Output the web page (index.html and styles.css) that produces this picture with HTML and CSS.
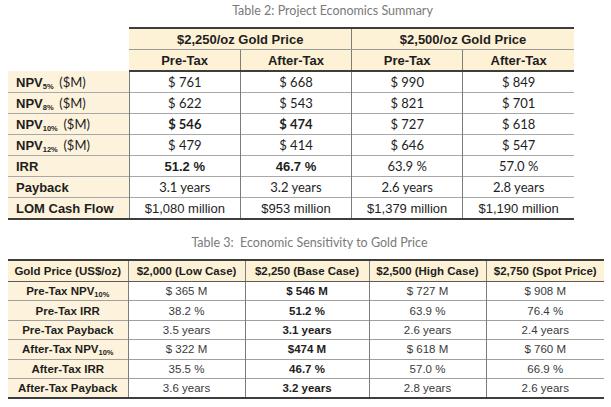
FILE: index.html
```html
<!DOCTYPE html>
<html>
<head>
<meta charset="utf-8">
<link rel="stylesheet" href="styles.css">
</head>
<body>
<div class="page">
  <div class="title t2">Table 2: Project Economics Summary</div>
  <table class="econ">
    <colgroup>
      <col class="c-label"><col class="c-val"><col class="c-val"><col class="c-val"><col class="c-val">
    </colgroup>
    <tr class="h1">
      <td class="blank"></td>
      <th colspan="2" class="first">$2,250/oz Gold Price</th>
      <th colspan="2">$2,500/oz Gold Price</th>
    </tr>
    <tr class="h2">
      <td class="blank"></td>
      <th class="first">Pre-Tax</th>
      <th>After-Tax</th>
      <th>Pre-Tax</th>
      <th>After-Tax</th>
    </tr>
    <tr class="first-row">
      <td class="lab">NPV<sub>5%</sub> <span class="cal">($M)</span></td>
      <td class="cal">$ 761</td><td class="cal">$ 668</td><td class="cal">$ 990</td><td class="cal">$ 849</td>
    </tr>
    <tr>
      <td class="lab">NPV<sub>8%</sub> <span class="cal">($M)</span></td>
      <td class="cal">$ 622</td><td class="cal">$ 543</td><td class="cal">$ 821</td><td class="cal">$ 701</td>
    </tr>
    <tr>
      <td class="lab">NPV<sub>10%</sub> <span class="cal">($M)</span></td>
      <td class="cal b">$ 546</td><td class="cal b">$ 474</td><td class="cal">$ 727</td><td class="cal">$ 618</td>
    </tr>
    <tr>
      <td class="lab">NPV<sub>12%</sub> <span class="cal">($M)</span></td>
      <td class="cal">$ 479</td><td class="cal">$ 414</td><td class="cal">$ 646</td><td class="cal">$ 547</td>
    </tr>
    <tr>
      <td class="lab">IRR</td>
      <td class="ar b">51.2 %</td><td class="ar b">46.7 %</td><td class="cal">63.9 %</td><td class="cal">57.0 %</td>
    </tr>
    <tr>
      <td class="lab">Payback</td>
      <td class="cal">3.1 years</td><td class="cal">3.2 years</td><td class="cal">2.6 years</td><td class="cal">2.8 years</td>
    </tr>
    <tr class="last-row">
      <td class="lab">LOM Cash Flow</td>
      <td class="ar">$1,080 million</td><td class="ar">$953 million</td><td class="ar">$1,379 million</td><td class="ar">$1,190 million</td>
    </tr>
  </table>

  <div class="title t3">Table 3:&nbsp; Economic Sensitivity to Gold Price</div>
  <table class="sens">
    <colgroup>
      <col class="s1"><col class="s2"><col class="s3"><col class="s4"><col class="s5">
    </colgroup>
    <tr class="sh">
      <th>Gold Price (US$/oz)</th>
      <th>$2,000 (Low Case)</th>
      <th>$2,250 (Base Case)</th>
      <th>$2,500 (High Case)</th>
      <th>$2,750 (Spot Price)</th>
    </tr>
    <tr>
      <td class="lab">Pre-Tax NPV<sub>10%</sub></td>
      <td>$ 365 M</td><td class="b">$ 546 M</td><td>$ 727 M</td><td>$ 908 M</td>
    </tr>
    <tr>
      <td class="lab">Pre-Tax IRR</td>
      <td>38.2 %</td><td class="b">51.2 %</td><td>63.9 %</td><td>76.4 %</td>
    </tr>
    <tr>
      <td class="lab">Pre-Tax Payback</td>
      <td>3.5 years</td><td class="b">3.1 years</td><td>2.6 years</td><td>2.4 years</td>
    </tr>
    <tr>
      <td class="lab">After-Tax NPV<sub>10%</sub></td>
      <td>$ 322 M</td><td class="b">$474 M</td><td>$ 618 M</td><td>$ 760 M</td>
    </tr>
    <tr>
      <td class="lab">After-Tax IRR</td>
      <td>35.5 %</td><td class="b">46.7 %</td><td>57.0 %</td><td>66.9 %</td>
    </tr>
    <tr class="last-row">
      <td class="lab">After-Tax Payback</td>
      <td>3.6 years</td><td class="b">3.2 years</td><td>2.8 years</td><td>2.6 years</td>
    </tr>
  </table>
</div>
</body>
</html>
```

FILE: styles.css
```css
html, body {
  margin: 0;
  padding: 0;
  background: #ffffff;
}

.page {
  width: 611px;
  height: 407px;
  overflow: hidden;
  font-family: "Liberation Sans", Arial, sans-serif;
  color: #1e1e1e;
}

.title {
  font-family: Lato, "Open Sans", sans-serif;
  font-size: 12.5px;
  color: #7a7a7a;
  text-align: center;
  line-height: 16px;
}

.t2 {
  padding-left: 54px;
  padding-top: 3px;
  height: 24px;
}

.t3 {
  padding-left: 8px;
  padding-top: 15px;
  height: 24px;
}

table {
  border-collapse: collapse;
  table-layout: fixed;
  margin-left: 8px;
}

td, th {
  padding: 0;
  text-align: center;
  white-space: nowrap;
  overflow: hidden;
}

sub {
  font-size: 7.5px;
  vertical-align: -2px;
  line-height: 0;
}

.cal {
  font-family: Lato, "Open Sans", sans-serif;
  font-size: 13px;
}

.b {
  font-weight: bold;
}

/* Table 2 */
.econ {
  width: 566px;
}

.econ .c-label { width: 121px; }
.econ .c-val { width: 111px; }

.econ td, .econ th {
  height: 20px;
  font-size: 13px;
}

.econ th {
  font-weight: bold;
  background: #fdf1d6;
  border-left: 1px solid #7c7c7c;
}

.econ th.first {
  border-left: none;
}

.econ .h1 th {
  border-top: 2px solid #3d3d3d;
  border-bottom: 1px solid #9a9a9a;
}

.econ .h2 th {
  border-bottom: 2px solid #3d3d3d;
}

.econ td {
  border-top: 1px solid #a8a8a8;
  border-left: 1px solid #7c7c7c;
}

.econ .blank {
  background: #ffffff;
  border: none;
}

.econ td.lab {
  text-align: left;
  padding-left: 8px;
  font-weight: bold;
  background: #fdf3dc;
  border-left: none;
}

.econ td.lab .cal {
  font-weight: normal;
  padding-left: 2px;
}

.econ .first-row td.lab {
  border-top: none;
}

.econ .last-row td {
  border-bottom: 2px solid #3d3d3d;
}

/* Table 3 */
.sens {
  width: 596px;
}

.sens .s1 { width: 120px; }
.sens .s2 { width: 117px; }
.sens .s3 { width: 124px; }
.sens .s4 { width: 117px; }
.sens .s5 { width: 118px; }

.sens td, .sens th {
  font-size: 11.5px;
  height: 18.4px;
  border-left: 1px solid #7c7c7c;
  border-top: 1px solid #a0a0a0;
}

.sens td {
  color: #3a3a3a;
}

.sens td.b {
  color: #1e1e1e;
}

.sens th:first-child, .sens td:first-child {
  border-left: none;
}

.sens .sh th {
  height: 20px;
  font-weight: bold;
  background: #fdf1d6;
  border-top: 2px solid #3d3d3d;
  border-bottom: 1px solid #5a5a5a;
}

.sens td.lab {
  font-weight: bold;
  color: #1e1e1e;
  background: #fdf3dc;
}

.sens .last-row td {
  border-bottom: 2px solid #3d3d3d;
}
```
